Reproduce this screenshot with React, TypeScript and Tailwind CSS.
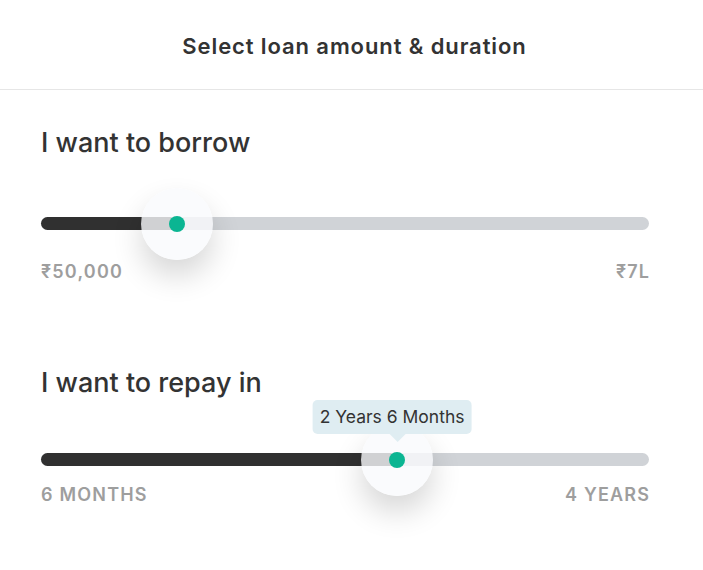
import { useState } from "react";

interface SliderProps {
  position: number; // percent along the track
  tooltip?: string;
}

function Slider({ position, tooltip }: SliderProps) {
  return (
    <div className="relative h-[13px] w-full rounded-full bg-[#d0d3d7]">
      <div className="h-full rounded-full bg-[#303030]" style={{ width: `${position}%` }} />
      <div
        className="absolute top-1/2 flex h-[72px] w-[72px] -translate-x-1/2 -translate-y-1/2 items-center justify-center rounded-full bg-[#f9fafc]/80 shadow-[0_16px_30px_rgba(0,0,0,0.16)]"
        style={{ left: `${position}%` }}
      >
        <div className="h-4 w-4 rounded-full bg-[#0bb592]" />
      </div>
      {tooltip && (
        <div
          className="absolute bottom-[calc(100%+11px)] flex -translate-x-1/2 flex-col items-center"
          style={{ left: `${position}%` }}
        >
          <div className="flex h-[34px] -translate-x-[5px] items-center whitespace-nowrap rounded-[5px] bg-[#dfedf2] px-[7px] text-[17.5px] text-[#333]">
            {tooltip}
          </div>
          <div className="h-0 w-0 border-x-[8px] border-t-[8px] border-x-transparent border-t-[#dfedf2]" />
        </div>
      )}
    </div>
  );
}

function RangeLabels({ left, right }: { left: string; right: string }) {
  return (
    <div className="flex justify-between text-[18px] font-semibold leading-5 tracking-[1.2px] text-[#9e9e9e]">
      <span>{left}</span>
      <span className="-mr-[1.2px]">{right}</span>
    </div>
  );
}

export default function App() {
  const [amount] = useState(195400);
  const [months] = useState(30.6);
  const amountPct = ((amount - 50000) / (700000 - 50000)) * 100;
  const monthsPct = ((months - 6) / (48 - 6)) * 100;

  return (
    <div className="h-[570px] w-[703px] bg-white font-['Inter','DejaVu_Sans',sans-serif] text-[#333]">
      <div className="flex h-[90px] items-center justify-center border-b border-[#e6e6e6] pl-[6px] pt-[4px] text-[22px] font-semibold tracking-[0.9px]">
        Select loan amount &amp; duration
      </div>

      <div className="pl-[41px] pr-[54px]">
        <h2 className="mt-[38px] text-[27px] font-medium leading-[30px]">I want to borrow</h2>
        <div className="mt-[59px]">
          <Slider position={amountPct} />
        </div>
        <div className="mt-[32px]">
          <RangeLabels left="₹50,000" right="₹7L" />
        </div>

        <h2 className="mt-[86px] text-[27px] font-medium leading-[30px]">I want to repay in</h2>
        <div className="mt-[55px]">
          <Slider position={monthsPct} tooltip="2 Years 6 Months" />
        </div>
        <div className="mt-[19px]">
          <RangeLabels left="6 MONTHS" right="4 YEARS" />
        </div>
      </div>
    </div>
  );
}
